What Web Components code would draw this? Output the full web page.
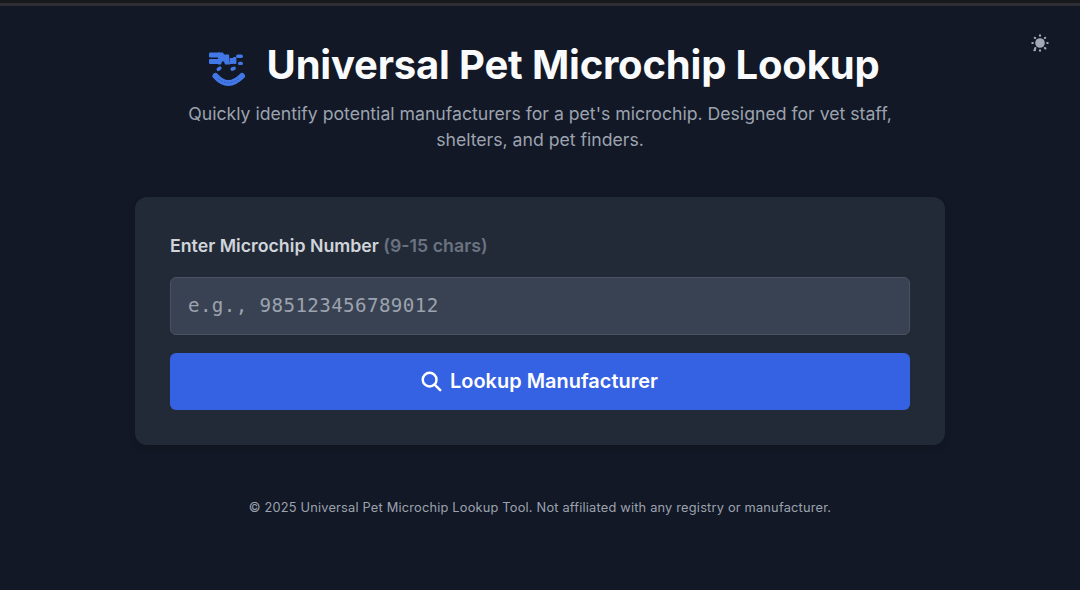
<!DOCTYPE html>
<html lang="en">
<head>
<meta charset="utf-8">
<title>Universal Pet Microchip Lookup</title>
<style>
    html, body { margin: 0; height: 100%; }
    body { background: #121825; font-family: Inter, "Liberation Sans", sans-serif; color: #f9fafb; }
</style>
</head>
<body>
<lookup-app>
    <lookup-header></lookup-header>
    <lookup-card></lookup-card>
    <lookup-footer>© 2025 Universal Pet Microchip Lookup Tool. Not affiliated with any registry or manufacturer.</lookup-footer>
</lookup-app>

<script>
class LookupApp extends HTMLElement {
    constructor() {
        super();
        this.attachShadow({ mode: "open" });
        this.shadowRoot.innerHTML = `
            <style>
                :host { display: block; position: relative; height: 590px; overflow: hidden; }
                .topbar { height: 3px; border-top: 3px solid #18191c; background: #2c2e33; }
                .wrap { width: 810px; margin: 0 auto; padding-top: 35px; }
                .theme { position: absolute; top: 33px; right: 30px; width: 20px; height: 20px; }
                .theme svg { display: block; }
            </style>
            <div class="topbar"></div>
            <div class="theme">
                <svg width="20" height="20" viewBox="0 0 20 20" fill="#a3aab6" stroke="#a3aab6" stroke-width="2.1" stroke-linecap="round">
                    <circle cx="10" cy="10" r="4.8" stroke="none"/>
                    <path d="M10 2.3v.5M10 17.2v.5M2.3 10h.5M17.2 10h.5M4.8 4.8l.3.3M14.9 14.9l.5.5M5 15.4l.3-.3M14.9 5.1l.3-.3M4.3 17.2l.8 -.2"/>
                </svg>
            </div>
            <div class="wrap"><slot></slot></div>
        `;
    }
}

class LookupHeader extends HTMLElement {
    constructor() {
        super();
        this.attachShadow({ mode: "open" });
        this.shadowRoot.innerHTML = `
            <style>
                :host { display: block; text-align: center; }
                .title { display: flex; justify-content: center; align-items: center; gap: 18px; }
                h1 { margin: 0; font-size: 40px; line-height: 48px; font-weight: 700; color: #f9fafb; letter-spacing: -0.18px; }
                svg { display: block; flex: none; }
                p { margin: 12px auto 0; width: 740px; font-size: 17.65px; line-height: 26px; color: #9ca3af; }
            </style>
            <div class="title">
                <svg width="48" height="48" viewBox="0 0 48 48" fill="#4177e6">
                    <rect x="8" y="11.5" width="11" height="5" rx="1"/>
                    <rect x="8" y="18" width="11" height="5" rx="1"/>
                    <path d="M17 11.5h5l1 2h5l1 10h-5l-1-3h-2l-1 3h-3z"/>
                    <rect x="29" y="17" width="3" height="6"/>
                    <rect x="32" y="16" width="3.4" height="7" rx="1"/>
                    <rect x="35" y="13.5" width="7" height="3.4" rx="1.7"/>
                    <rect x="37" y="20.8" width="5" height="3.2" rx="1.6"/>
                    <rect x="15.5" y="26" width="5.5" height="3.6" rx="1.8" transform="rotate(-35 18 28)"/>
                    <rect x="29.5" y="26" width="5.5" height="3.6" rx="1.8" transform="rotate(-20 32 28)"/>
                    <path d="M14.5 35Q27 49 41 35" fill="none" stroke="#4177e6" stroke-width="6" stroke-linecap="round"/>
                    <path d="M17 37.5Q27 46 38 37.5" fill="none" stroke="#2b56b4" stroke-width="0.8" stroke-dasharray="2 1.5"/>
                </svg>
                <h1>Universal Pet Microchip Lookup</h1>
            </div>
            <p>Quickly identify potential manufacturers for a pet's microchip. Designed for vet staff, shelters, and pet finders.</p>
        `;
    }
}

class LookupCard extends HTMLElement {
    constructor() {
        super();
        this.attachShadow({ mode: "open" });
        this.shadowRoot.innerHTML = `
            <style>
                :host { display: block; margin-top: 44px; background: #222a37; border-radius: 12px; padding: 35px; box-shadow: 0 4px 6px rgba(0,0,0,.1); }
                label { display: block; font-size: 17.76px; line-height: 24px; font-weight: 600; color: #d1d5db; margin-bottom: 19px; margin-top: 2px; }
                label span { color: #6b7280; }
                input { display: block; box-sizing: border-box; width: 100%; height: 58px; padding: 0 17px 2px; background: #394252; border: 1px solid #4a5160; border-radius: 6px; outline: none; color: #f9fafb; font-family: "DejaVu Sans Mono", monospace; font-size: 19.2px; letter-spacing: .38px; }
                input::placeholder { color: #9ca3af; opacity: 1; }
                button { display: flex; align-items: center; justify-content: center; gap: 8px; width: 100%; height: 57px; margin-top: 18px; padding: 0 2px 2px 0; border: 0; border-radius: 6px; background: #3562e2; color: #fff; font-family: inherit; font-size: 19.9px; letter-spacing: .04px; font-weight: 600; }
                svg { display: block; flex: none; }
            </style>
            <label for="chip">Enter Microchip Number <span>(9-15 chars)</span></label>
            <input id="chip" type="text" placeholder="e.g., 985123456789012">
            <button type="button">
                <svg width="22" height="22" viewBox="0 0 24 24" fill="none" stroke="#fff" stroke-width="2.7" stroke-linecap="round"><circle cx="10.5" cy="10.5" r="7.5"/><path d="M16 16l6 6"/></svg>
                Lookup Manufacturer
            </button>
        `;
    }
}

class LookupFooter extends HTMLElement {
    constructor() {
        super();
        this.attachShadow({ mode: "open" });
        this.shadowRoot.innerHTML = `
            <style>
                :host { display: block; margin-top: 53px; text-align: center; font-size: 12.8px; letter-spacing: .2px; line-height: 20px; color: #9ca3af; }
            </style>
            <slot></slot>
        `;
    }
}

customElements.define("lookup-app", LookupApp);
customElements.define("lookup-header", LookupHeader);
customElements.define("lookup-card", LookupCard);
customElements.define("lookup-footer", LookupFooter);
</script>
</body>
</html>
